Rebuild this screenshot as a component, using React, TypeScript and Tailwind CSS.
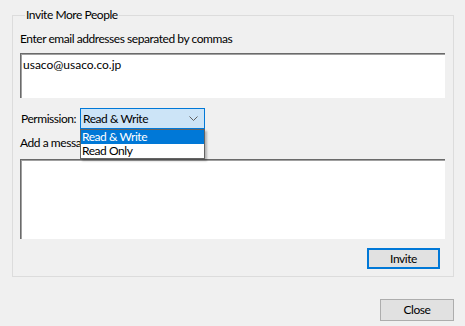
const font = { fontFamily: 'Lato, "Liberation Sans", sans-serif' };

const Chevron = () => (
  <svg width="9" height="5" viewBox="0 0 9 5" className="text-[#606060]">
    <path d="M0.5 0.5 L4.5 4.5 L8.5 0.5" fill="none" stroke="currentColor" strokeWidth="1" />
  </svg>
);

export default function App() {
  return (
    <div
      className="w-[465px] h-[326px] bg-[#f0f0f0] text-[12px] leading-[16px] tracking-[-0.45px] text-black flex flex-col"
      style={font}
    >
      {/* Group box */}
      <fieldset className="ml-[12px] mt-[7px] w-[442px] h-[270px] border border-[#dcdcdc] pl-[7px] pr-[8px] flex flex-col">
        <legend className="ml-[5px] px-[1px] leading-[16px]">Invite More People</legend>

        <div className="mt-[8px]">Enter email addresses separated by commas</div>

        <div className="mt-[6px] w-[425px] h-[45px] bg-white border-t border-l border-[#6a6a6a] border-r-[#e3e3e3] border-b-[#e3e3e3] shadow-[inset_1px_1px_0_#a0a0a0] px-[2px] pt-[3px] tracking-[0px]">
          usaco@usaco.co.jp
        </div>

        {/* Permission row */}
        <div className="mt-[10px] flex items-center relative">
          <span className="ml-[1px] w-[59px] shrink-0 whitespace-nowrap">Permission:</span>
          <div className="w-[125px] h-[21px] bg-[#cce4f7] border border-[#0078d7] flex items-center justify-between pl-[2px] pr-[6px]">
            <span>Read &amp; Write</span>
            <Chevron />
          </div>

          {/* Open dropdown list */}
          <div className="absolute left-[60px] top-[21px] w-[125px] bg-white border border-[#646464] shadow-[2px_2px_2px_rgba(0,0,0,0.25)] z-10">
            <div className="h-[14px] leading-[14px] pl-[1px] bg-[#0078d7] text-white">Read &amp; Write</div>
            <div className="h-[14px] leading-[14px] pl-[1px]">Read Only</div>
          </div>
        </div>

        <div className="mt-[6px]">Add a message</div>

        <div className="mt-[8px] w-[425px] h-[80px] bg-white border-t border-l border-[#6a6a6a] border-r-[#e3e3e3] border-b-[#e3e3e3] shadow-[inset_1px_1px_0_#a0a0a0]" />

        <div className="mt-[9px] w-[425px] flex justify-end pr-[5px]">
          <button className="w-[73px] h-[21px] bg-[#e1e1e1] border-2 border-[#0078d7] flex items-center justify-center">
            Invite
          </button>
        </div>
      </fieldset>

      <div className="flex justify-end pr-[11px] mt-[22px]">
        <button className="w-[74px] h-[22px] bg-[#e1e1e1] border border-[#adadad] flex items-center justify-center">
          Close
        </button>
      </div>
    </div>
  );
}
